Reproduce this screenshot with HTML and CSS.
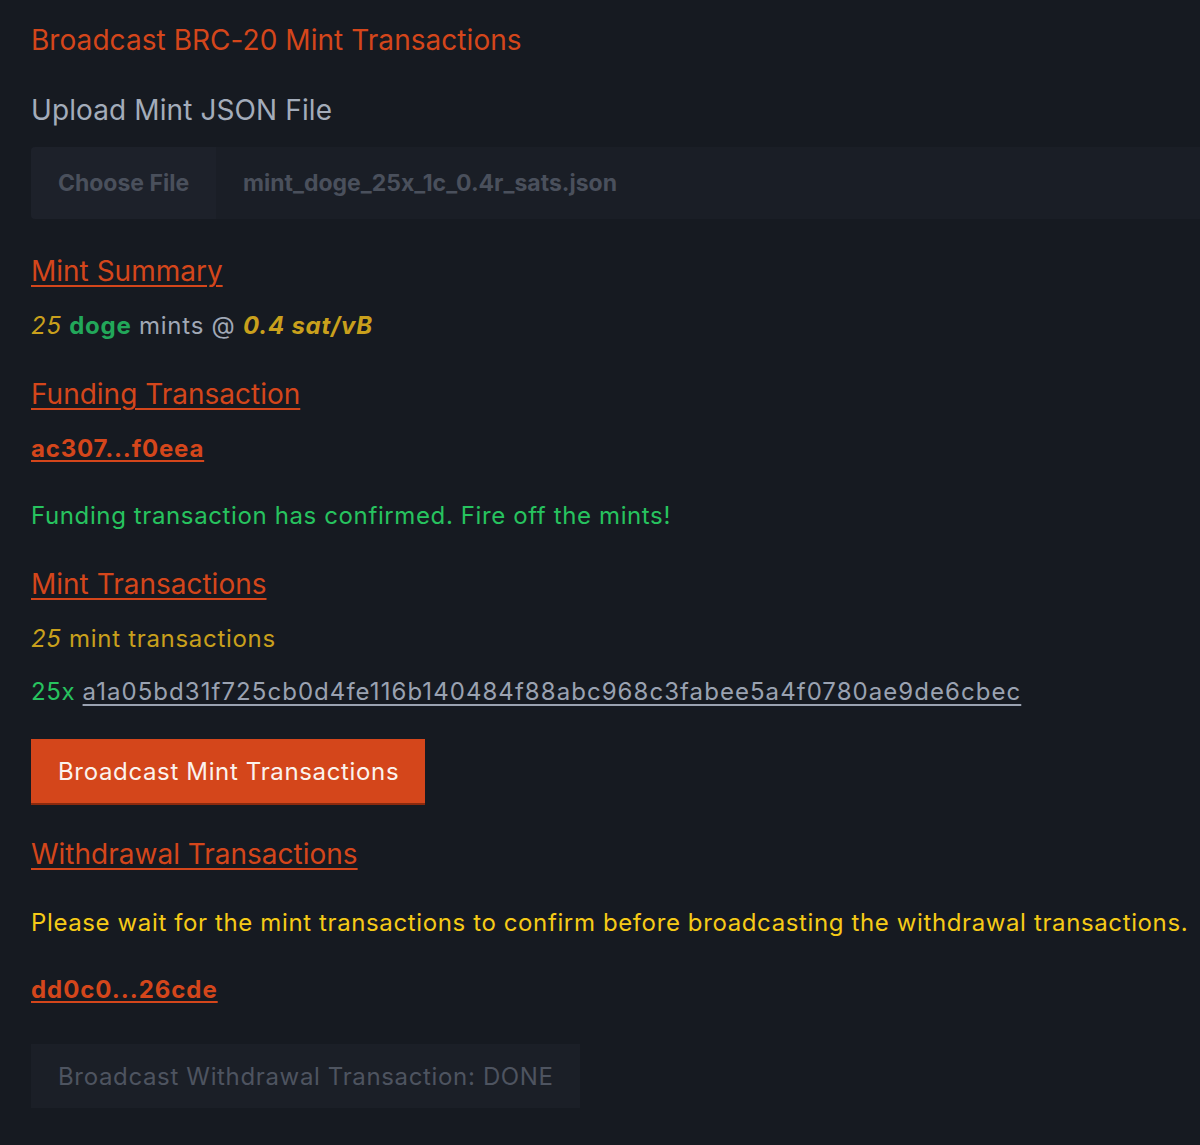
FILE: index.html
```html
<!DOCTYPE html>
<html lang="en">
<head>
<meta charset="utf-8">
<title>Broadcast BRC-20 Mint Transactions</title>
<link rel="stylesheet" href="styles.css">
</head>
<body>
<main class="page">
  <h1 class="title">Broadcast BRC-20 Mint Transactions</h1>

  <label class="upload-label" for="file">Upload Mint JSON File</label>
  <div class="file-input">
    <span class="file-btn">Choose File</span>
    <span class="file-name">mint_doge_25x_1c_0.4r_sats.json</span>
  </div>

  <h2 class="section-title"><a href="#">Mint Summary</a></h2>
  <p class="line summary"><em class="num">25</em> <strong class="tick">doge</strong> <span class="muted">mints @</span> <strong class="rate">0.4 sat/vB</strong></p>

  <h2 class="section-title"><a href="#">Funding Transaction</a></h2>
  <p class="line"><a class="txid" href="#">ac307...f0eea</a></p>
  <p class="line gap success">Funding transaction has confirmed. Fire off the mints!</p>

  <h2 class="section-title"><a href="#">Mint Transactions</a></h2>
  <p class="line count"><em>25</em> mint transactions</p>
  <p class="line"><span class="success">25x</span> <a class="hash" href="#">a1a05bd31f725cb0d4fe116b140484f88abc968c3fabee5a4f0780ae9de6cbec</a></p>
  <button class="btn btn-primary">Broadcast Mint Transactions</button>

  <h2 class="section-title wd"><a href="#">Withdrawal Transactions</a></h2>
  <p class="line gap warn">Please wait for the mint transactions to confirm before broadcasting the withdrawal transactions.</p>
  <p class="line gap"><a class="txid wide" href="#">dd0c0...26cde</a></p>
  <button class="btn btn-disabled" disabled>Broadcast Withdrawal Transaction: DONE</button>
</main>
</body>
</html>
```

FILE: styles.css
```css
html, body {
  margin: 0;
  padding: 0;
  background: #161a21;
}
body {
  font-family: Inter, "Noto Sans", "Liberation Sans", sans-serif;
  color: #a0a8b6;
  overflow: hidden;
}
.page {
  display: flex;
  flex-direction: column;
  align-items: flex-start;
  padding: 22px 0 0 31px;
}
.title {
  margin: 0;
  font-size: 28px;
  font-weight: 400;
  line-height: 36px;
  color: #d4461b;
  letter-spacing: 0.05px;
}
.upload-label {
  margin-top: 34px;
  font-size: 28px;
  line-height: 36px;
  color: #a3acba;
  letter-spacing: 0.1px;
}
.file-input {
  margin-top: 19px;
  align-self: stretch;
  height: 72px;
  display: flex;
  align-items: center;
  background: #1a1e26;
  border-radius: 4px 0 0 4px;
  font-weight: 700;
  font-size: 23px;
  color: #4a505c;
}
.file-btn {
  height: 100%;
  width: 185px;
  display: flex;
  align-items: center;
  justify-content: center;
  background: #1d212a;
  border-radius: 4px 0 0 4px;
  box-sizing: border-box;
}
.file-name {
  margin-left: 27px;
}
.section-title {
  margin: 34px 0 0;
  font-size: 28px;
  font-weight: 400;
  line-height: 36px;
  letter-spacing: 0;
}
.section-title.wd { margin-top: 33px; }
.section-title a {
  color: #d4461b;
  text-decoration: underline;
  text-decoration-thickness: 2px;
  text-underline-offset: 4px;
}
.line {
  margin: 21px 0 0;
  font-size: 24px;
  line-height: 32px;
  letter-spacing: 0.62px;
}
.line.gap { margin-top: 35px; }
.summary { letter-spacing: 0.75px; }
.num { color: #c9a01c; }
.tick { color: #22a75a; font-weight: 700; }
.muted { color: #a0a8b6; }
.rate { color: #c9a01c; font-weight: 700; font-style: italic; }
.txid {
  color: #d4461b;
  font-weight: 700;
  letter-spacing: 0.8px;
  text-decoration: underline;
  text-decoration-thickness: 2px;
  text-underline-offset: 3px;
}
.txid.wide { letter-spacing: 0.95px; }
.success { color: #27c35f; }
.count { color: #c9a01c; letter-spacing: 0.7px; }
.hash {
  color: #9aa2b1;
  letter-spacing: 1.05px;
  text-decoration: underline;
  text-decoration-thickness: 2px;
  text-underline-offset: 4px;
}
.warn { color: #f6cb17; }
.btn {
  margin-top: 31px;
  height: 64px;
  padding: 0 26px 0 27px;
  font-family: inherit;
  font-size: 24px;
  border: none;
  border-radius: 0;
  letter-spacing: 0.65px;
}
.btn-primary {
  background: #d4461b;
  color: #fbf3ee;
  box-shadow: 0 2px 0 #8a2a0e;
}
.btn-disabled {
  margin-top: 38px;
  background: #1b1f27;
  color: #4e5460;
}
```
